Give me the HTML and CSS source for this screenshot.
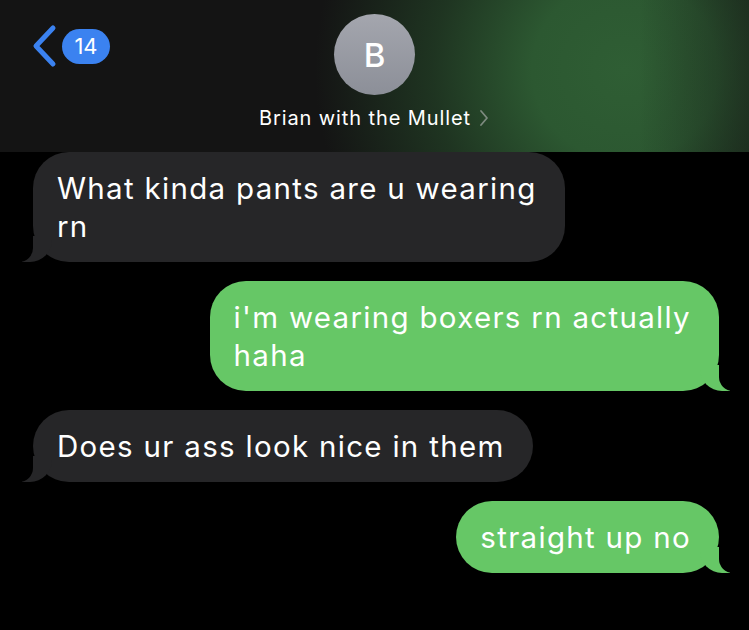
FILE: index.html
```html
<!DOCTYPE html>
<html lang="en">
<head>
    <meta charset="UTF-8">
    <meta name="viewport" content="width=device-width, initial-scale=1.0">
    <title>Brian with the Mullet</title>
    <link rel="stylesheet" href="styles.css">
</head>
<body>
    <div class="header">
        <div class="back">
            <svg class="chevron" width="28" height="44" viewBox="0 0 28 44">
                <path d="M23 4 L6 22 L23 40" fill="none" stroke="#3b82f0" stroke-width="5" stroke-linecap="round" stroke-linejoin="round"/>
            </svg>
            <span class="badge">14</span>
        </div>
        <div class="contact">
            <div class="avatar">B</div>
            <div class="name">
                Brian with the Mullet
                <svg class="more" width="12" height="20" viewBox="0 0 12 20">
                    <path d="M3 3 L9 10 L3 17" fill="none" stroke="#7d8a7f" stroke-width="1.8" stroke-linecap="round" stroke-linejoin="round"/>
                </svg>
            </div>
        </div>
    </div>

    <div class="thread">
        <div class="bubble in">What kinda pants are u wearing<br>rn</div>
        <div class="bubble out">i'm wearing boxers rn actually<br>haha</div>
        <div class="bubble in">Does ur ass look nice in them</div>
        <div class="bubble out">straight up no</div>
    </div>
</body>
</html>
```

FILE: styles.css
```css
body, html {
    margin: 0;
    padding: 0;
    background-color: #000000;
    font-family: Inter, "Noto Sans", sans-serif;
    color: #ffffff;
}
.header {
    position: relative;
    height: 152px;
    background:
        linear-gradient(to left, rgba(20, 20, 20, 0.45), rgba(20, 20, 20, 0) 110px),
        radial-gradient(ellipse 310px 300px at 625px 70px, #2f5e34 0%, #2c5831 30%, rgba(38, 74, 42, 0.6) 62%, rgba(20, 20, 20, 0) 100%),
        #141414;
    display: flex;
    justify-content: center;
}
.back {
    position: absolute;
    left: 30px;
    top: 24px;
    display: flex;
    align-items: center;
}
.chevron {
    display: block;
}
.badge {
    margin-left: 4px;
    background-color: #3b82f0;
    border-radius: 18px;
    height: 35px;
    min-width: 48px;
    display: flex;
    align-items: center;
    justify-content: center;
    font-size: 22px;
    color: #ffffff;
}
.contact {
    display: flex;
    flex-direction: column;
    align-items: center;
    padding-top: 14px;
}
.avatar {
    width: 81px;
    height: 81px;
    border-radius: 50%;
    background: linear-gradient(#a4a6ae, #8c8f98);
    display: flex;
    align-items: center;
    justify-content: center;
    font-size: 33px;
    font-weight: 500;
}
.name {
    margin-top: 8px;
    font-size: 20px;
    line-height: 30px;
    letter-spacing: 0.9px;
    display: flex;
    align-items: center;
}
.more {
    margin-left: 7px;
}
.thread {
    display: flex;
    flex-direction: column;
    gap: 19px;
    padding: 0 30px 0 33px;
}
.bubble {
    position: relative;
    padding: 17px 28px 17px 24px;
    border-radius: 36px;
    font-size: 29.5px;
    line-height: 38px;
    letter-spacing: 1.3px;
}
.bubble.in {
    align-self: flex-start;
    background-color: #262628;
}
.bubble.out {
    align-self: flex-end;
    background-color: #66c766;
}
/* tails */
.bubble::before,
.bubble::after {
    content: "";
    position: absolute;
    bottom: 0;
    height: 26px;
}
.bubble.in::before {
    left: -11px;
    width: 30px;
    background-color: #262628;
    border-bottom-right-radius: 22px;
}
.bubble.in::after {
    left: -20px;
    width: 20px;
    background-color: #000000;
    border-bottom-right-radius: 14px;
}
.bubble.out::before {
    right: -11px;
    width: 30px;
    background-color: #66c766;
    border-bottom-left-radius: 22px;
}
.bubble.out::after {
    right: -20px;
    width: 20px;
    background-color: #000000;
    border-bottom-left-radius: 14px;
}
```
